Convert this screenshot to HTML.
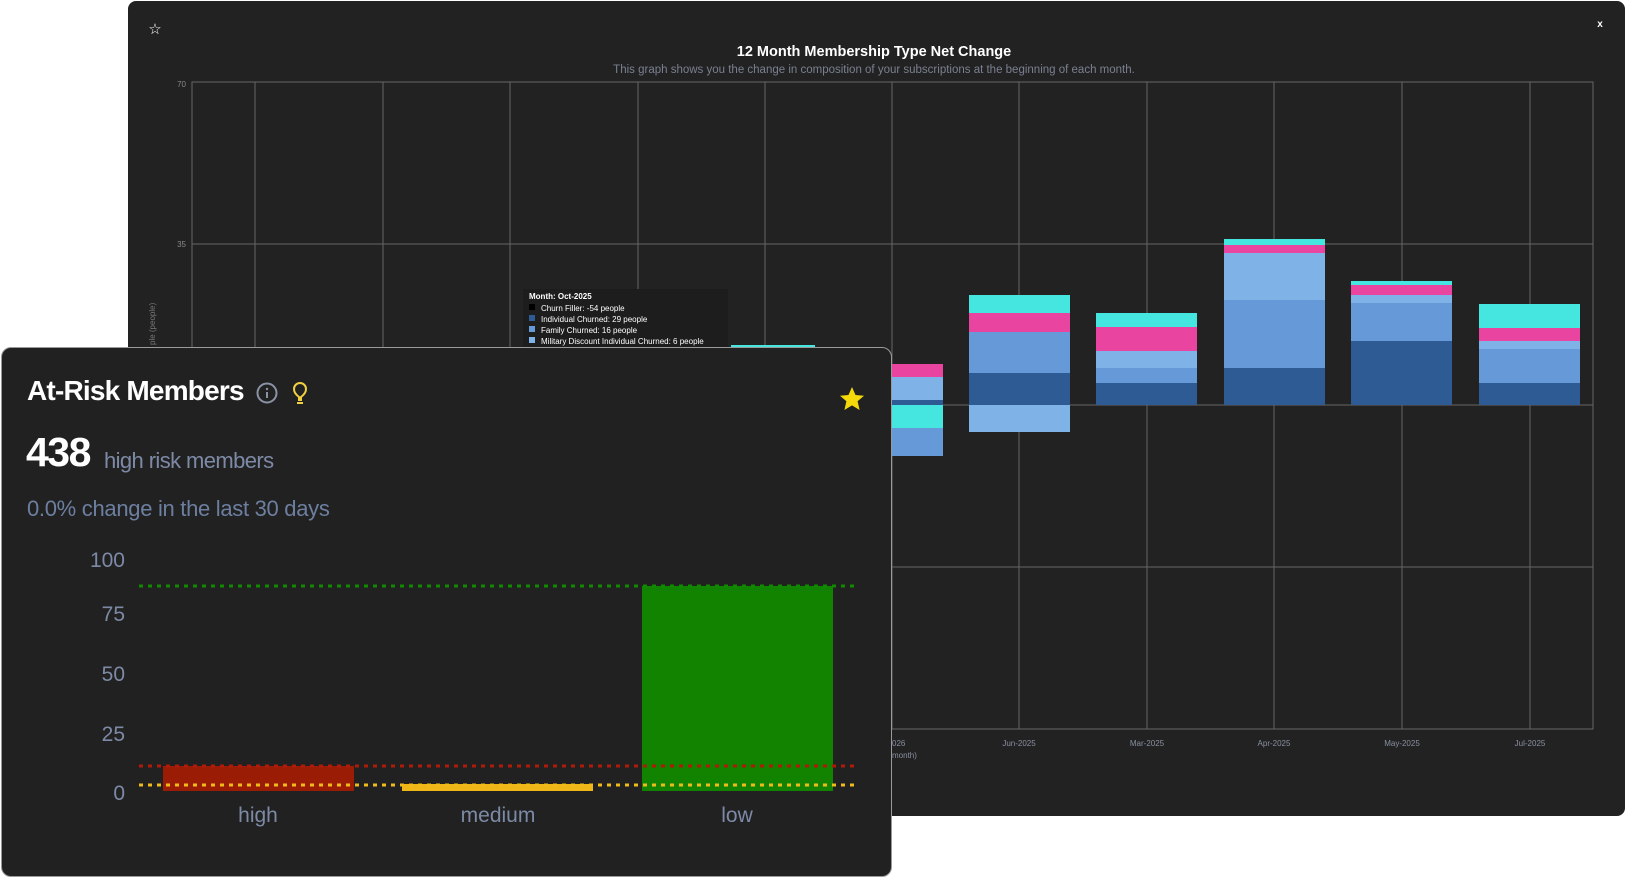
<!DOCTYPE html>
<html><head><meta charset="utf-8"><style>
html,body{margin:0;padding:0;background:#fff;width:1625px;height:878px;overflow:hidden;font-family:"Liberation Sans",sans-serif}
#back{position:absolute;left:128px;top:1px;width:1497px;height:815px;background:#222;border-radius:8px}
#front{position:absolute;left:1px;top:347px;width:889px;height:528px;background:#212121;border:1px solid #9a9a9a;border-radius:10px}
.t{position:absolute;white-space:nowrap}
</style></head><body>
<div id="back"></div>
<svg style="position:absolute;left:0;top:0" width="1625" height="878">
<g font-family="Liberation Sans, sans-serif">
<text x="155" y="34" font-size="15" fill="#fff" text-anchor="middle">☆</text>
<text x="1600" y="27" font-size="10" fill="#fff" text-anchor="middle" font-weight="bold">x</text>
<text x="874" y="56" font-size="14.5" fill="#fff" font-weight="bold" text-anchor="middle">12 Month Membership Type Net Change</text>
<text x="874" y="73" font-size="11.5" fill="#7a8090" text-anchor="middle">This graph shows you the change in composition of your subscriptions at the beginning of each month.</text>
<text x="186" y="87" font-size="8" fill="#888" text-anchor="end">70</text>
<text x="186" y="247" font-size="8" fill="#888" text-anchor="end">35</text>
<text x="155" y="345" font-size="8" fill="#777" transform="rotate(-90 155 345)">ple (people)</text>
<g stroke="#666" stroke-width="1">
<rect x="192" y="82" width="1401" height="647" fill="none"/>
<line x1="192" y1="244" x2="1593" y2="244"/><line x1="192" y1="405" x2="1593" y2="405"/><line x1="192" y1="567" x2="1593" y2="567"/>
<line x1="255" y1="82" x2="255" y2="729"/><line x1="383" y1="82" x2="383" y2="729"/><line x1="510" y1="82" x2="510" y2="729"/><line x1="638" y1="82" x2="638" y2="729"/><line x1="765" y1="82" x2="765" y2="729"/><line x1="892" y1="82" x2="892" y2="729"/><line x1="1019" y1="82" x2="1019" y2="729"/><line x1="1147" y1="82" x2="1147" y2="729"/><line x1="1274" y1="82" x2="1274" y2="729"/><line x1="1402" y1="82" x2="1402" y2="729"/><line x1="1530" y1="82" x2="1530" y2="729"/>
</g>
<g>
<rect x="850" y="364" width="93" height="13" fill="#e844a0"/><rect x="850" y="377" width="93" height="23" fill="#7fb3e8"/><rect x="850" y="400" width="93" height="5" fill="#2e5b94"/>
<rect x="850" y="405" width="93" height="23" fill="#45e6e0"/><rect x="850" y="428" width="93" height="28" fill="#6699d8"/>
<rect x="731" y="345" width="84" height="4" fill="#45e6e0"/>
<rect x="969" y="295" width="101" height="18" fill="#45e6e0"/><rect x="969" y="313" width="101" height="19" fill="#e844a0"/><rect x="969" y="332" width="101" height="41" fill="#6699d8"/><rect x="969" y="373" width="101" height="32" fill="#2e5b94"/><rect x="969" y="405" width="101" height="27" fill="#7fb3e8"/>
<rect x="1096" y="313" width="101" height="14" fill="#45e6e0"/><rect x="1096" y="327" width="101" height="24" fill="#e844a0"/><rect x="1096" y="351" width="101" height="17" fill="#7fb3e8"/><rect x="1096" y="368" width="101" height="15" fill="#6699d8"/><rect x="1096" y="383" width="101" height="22" fill="#2e5b94"/>
<rect x="1224" y="239" width="101" height="6" fill="#45e6e0"/><rect x="1224" y="245" width="101" height="8" fill="#e844a0"/><rect x="1224" y="253" width="101" height="47" fill="#7fb3e8"/><rect x="1224" y="300" width="101" height="68" fill="#6699d8"/><rect x="1224" y="368" width="101" height="37" fill="#2e5b94"/>
<rect x="1351" y="281" width="101" height="4" fill="#45e6e0"/><rect x="1351" y="285" width="101" height="10" fill="#e844a0"/><rect x="1351" y="295" width="101" height="8" fill="#7fb3e8"/><rect x="1351" y="303" width="101" height="38" fill="#6699d8"/><rect x="1351" y="341" width="101" height="64" fill="#2e5b94"/>
<rect x="1479" y="304" width="101" height="24" fill="#45e6e0"/><rect x="1479" y="328" width="101" height="13" fill="#e844a0"/><rect x="1479" y="341" width="101" height="8" fill="#7fb3e8"/><rect x="1479" y="349" width="101" height="34" fill="#6699d8"/><rect x="1479" y="383" width="101" height="22" fill="#2e5b94"/>
</g>
<g font-size="8" fill="#8890a0" text-anchor="middle">
<text x="1019" y="746">Jun-2025</text><text x="1147" y="746">Mar-2025</text><text x="1274" y="746">Apr-2025</text><text x="1402" y="746">May-2025</text><text x="1530" y="746">Jul-2025</text>
<text x="892" y="746" text-anchor="start">026</text><text x="892" y="758" text-anchor="start">month)</text>
</g>
<rect x="523" y="289" width="205" height="60" fill="#1d1d1d"/>
<g font-size="8" fill="#fff">
<text x="529" y="299" font-weight="bold">Month: Oct-2025</text>
<rect x="529" y="304" width="6" height="6" fill="#000"/><text x="541" y="311">Churn Filler: -54 people</text>
<rect x="529" y="315" width="6" height="6" fill="#2e5b94"/><text x="541" y="322">Individual Churned: 29 people</text>
<rect x="529" y="326" width="6" height="6" fill="#6699d8"/><text x="541" y="333">Family Churned: 16 people</text>
<rect x="529" y="337" width="6" height="6" fill="#7fb3e8"/><text x="541" y="344">Military Discount Individual Churned: 6 people</text>
</g>
</g>
</svg>
<div id="front"></div>
<div class="t" style="left:27px;top:375px;font-size:28px;font-weight:bold;color:#fff;letter-spacing:-0.8px">At-Risk Members</div>
<svg style="position:absolute;left:255px;top:380px" width="60" height="28">
<circle cx="12" cy="13" r="9.5" fill="none" stroke="#8a93a6" stroke-width="2"/>
<circle cx="12" cy="9" r="1.2" fill="#8a93a6"/><line x1="12" y1="12" x2="12" y2="18" stroke="#8a93a6" stroke-width="2"/>
<path d="M44 20 v-3 c-4-3-5-6-5-8 a6 6 0 0 1 12 0 c0 2-1 5-5 8 v3 z" fill="none" stroke="#f0d040" stroke-width="2"/>
<line x1="42" y1="23" x2="48" y2="23" stroke="#f0d040" stroke-width="2"/>
</svg>
<svg style="position:absolute;left:838px;top:385px" width="28" height="28"><path d="M14 2 L17.5 10 L26 10.7 L19.6 16.3 L21.6 25 L14 20.4 L6.4 25 L8.4 16.3 L2 10.7 L10.5 10 Z" fill="#f5d90a"/></svg>
<div class="t" style="left:26px;top:429px;font-size:41px;font-weight:bold;color:#fff;letter-spacing:-1.5px">438</div>
<div class="t" style="left:104px;top:448px;font-size:22px;color:#7d8aa6;letter-spacing:-0.6px">high risk members</div>
<div class="t" style="left:27px;top:496px;font-size:22px;color:#6d7fa0;letter-spacing:-0.3px">0.0% change in the last 30 days</div>
<svg style="position:absolute;left:0;top:0" width="900" height="878">
<g font-family="Liberation Sans, sans-serif" font-size="21" fill="#7d8aa6" text-anchor="end">
<text x="125" y="567">100</text><text x="125" y="621">75</text><text x="125" y="681">50</text><text x="125" y="741">25</text><text x="125" y="800">0</text>
</g>
<rect x="163" y="766" width="191" height="25" fill="#9b1c04"/>
<rect x="402" y="784" width="191" height="7" fill="#eeb616"/>
<rect x="642" y="586" width="191" height="205" fill="#118300"/>
<g stroke-width="3" stroke-dasharray="4 5">
<line x1="139" y1="586" x2="859" y2="586" stroke="#108a00"/>
<line x1="139" y1="766" x2="859" y2="766" stroke="#b01a08"/>
<line x1="139" y1="785" x2="859" y2="785" stroke="#f0bb18"/>
</g>
<g font-family="Liberation Sans, sans-serif" font-size="21" fill="#7d8aa6" text-anchor="middle">
<text x="258" y="822">high</text><text x="498" y="822">medium</text><text x="737" y="822">low</text>
</g>
</svg>
</body></html>
